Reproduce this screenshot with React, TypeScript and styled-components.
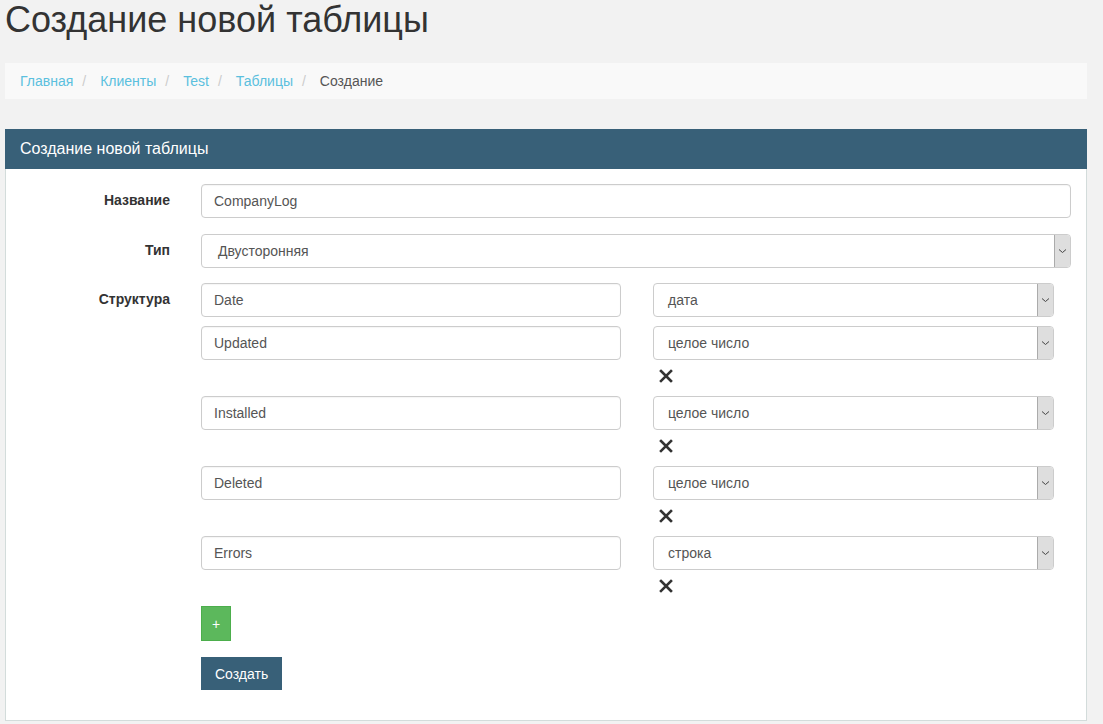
import React from 'react';
import styled, { createGlobalStyle } from 'styled-components';

const GlobalStyle = createGlobalStyle`
  html, body {
    margin: 0;
    padding: 0;
    background: #f2f2f2;
    font-family: "Liberation Sans", Arial, sans-serif;
    color: #333;
  }
  * {
    box-sizing: border-box;
  }
`;

const Page = styled.div`
  width: 1082px;
  margin-left: 5px;
  padding-bottom: 2px;
`;

const Title = styled.h1`
  margin: 0 0 23px;
  font-size: 36px;
  font-weight: 500;
  line-height: 40px;
  color: #333;
`;

const Breadcrumb = styled.ol`
  display: flex;
  align-items: center;
  list-style: none;
  margin: 0 0 30px;
  padding: 8px 15px;
  height: 36px;
  background: #f9f9f9;
  font-size: 14px;
  line-height: 20px;
`;

const Crumb = styled.li<{ $active?: boolean }>`
  color: ${(p) => (p.$active ? '#555' : '#5bc0de')};
`;

const Sep = styled.li`
  color: #ccc;
  margin: 0 14px 0 9px;
`;

const Panel = styled.div`
  background: #fff;
  border: 1px solid #d3dcdb;
  border-top: none;
`;

const PanelHeading = styled.div`
  height: 40px;
  margin: 0 -1px;
  padding: 0 15px;
  display: flex;
  align-items: center;
  background: #386078;
  color: #fff;
  font-size: 16px;
`;

const PanelBody = styled.div`
  padding: 15px 15px 30px 0;
`;

const FormRow = styled.div<{ $gap?: number }>`
  display: grid;
  grid-template-columns: 164px 1fr;
  column-gap: 31px;
  margin-bottom: ${(p) => p.$gap ?? 0}px;
`;

const Label = styled.label`
  text-align: right;
  font-weight: bold;
  font-size: 14px;
  padding-top: 8px;
  line-height: 16px;
  color: #333;
`;

const Input = styled.div`
  height: 34px;
  width: 100%;
  border: 1px solid #ccc;
  border-radius: 4px;
  padding: 0 12px;
  display: flex;
  align-items: center;
  font-size: 14px;
  color: #555;
  background: #fff;
  box-shadow: inset 0 1px 1px rgba(0, 0, 0, 0.04);
`;

const Select = styled.div`
  height: 34px;
  width: 100%;
  border: 1px solid #ccc;
  border-radius: 4px;
  display: flex;
  align-items: stretch;
  font-size: 14px;
  color: #555;
  background: #fff;
  overflow: hidden;
`;

const SelectValue = styled.span<{ $pad: number }>`
  flex: 1;
  display: flex;
  align-items: center;
  padding-left: ${(p) => p.$pad}px;
`;

const ArrowBox = styled.span`
  width: 17px;
  display: flex;
  align-items: center;
  justify-content: center;
  background: #dedede;
  border: 1px solid #c8c8c8;
  border-left-color: #ababab;
  margin: -1px -1px -1px 0;
`;

const Fields = styled.div`
  display: flex;
  flex-direction: column;
`;

const FieldRow = styled.div`
  display: grid;
  grid-template-columns: 420px 401px;
  column-gap: 32px;
  margin-bottom: 9px;
`;

const RemoveLine = styled.div`
  display: grid;
  grid-template-columns: 420px 401px;
  column-gap: 32px;
  margin: -1px 0 12px;
  height: 16px;
`;

const RemoveIcon = styled.span`
  grid-column: 2;
  padding-left: 6px;
  display: flex;
  align-items: center;
`;

const Actions = styled.div`
  display: flex;
  flex-direction: column;
  align-items: flex-start;
`;

const PlusButton = styled.button`
  width: 30px;
  height: 35px;
  background: #5cb85c;
  border: 1px solid #4cae4c;
  color: #fff;
  font-size: 14px;
  font-family: "Liberation Sans", Arial, sans-serif;
  padding: 0;
`;

const SubmitButton = styled.button`
  height: 33px;
  padding: 0 13px;
  margin-top: 16px;
  background: #386078;
  border: 1px solid #386078;
  color: #fff;
  font-size: 14px;
  font-family: "Liberation Sans", Arial, sans-serif;
`;

const Chevron = () => (
  <svg width="9" height="6" viewBox="0 0 9 6">
    <path d="M1 1.5 L4.5 4.5 L8 1.5" fill="none" stroke="#444" strokeWidth="1" />
  </svg>
);

const Cross = () => (
  <svg width="14" height="14" viewBox="0 0 14 14">
    <path d="M2 2 L12 12 M12 2 L2 12" stroke="#333" strokeWidth="2.6" strokeLinecap="square" />
  </svg>
);

const fields = [
  { name: 'Date', type: 'дата' },
  { name: 'Updated', type: 'целое число' },
  { name: 'Installed', type: 'целое число' },
  { name: 'Deleted', type: 'целое число' },
  { name: 'Errors', type: 'строка' },
];

const App: React.FC = () => {
  return (
    <>
      <GlobalStyle />
      <Page>
        <Title>Создание новой таблицы</Title>
        <Breadcrumb>
          <Crumb>Главная</Crumb>
          <Sep>/</Sep>
          <Crumb>Клиенты</Crumb>
          <Sep>/</Sep>
          <Crumb>Test</Crumb>
          <Sep>/</Sep>
          <Crumb>Таблицы</Crumb>
          <Sep>/</Sep>
          <Crumb $active>Создание</Crumb>
        </Breadcrumb>
        <Panel>
          <PanelHeading>Создание новой таблицы</PanelHeading>
          <PanelBody>
            <FormRow $gap={16}>
              <Label>Название</Label>
              <Input>CompanyLog</Input>
            </FormRow>
            <FormRow $gap={15}>
              <Label>Тип</Label>
              <Select>
                <SelectValue $pad={16}>Двусторонняя</SelectValue>
                <ArrowBox>
                  <Chevron />
                </ArrowBox>
              </Select>
            </FormRow>
            <FormRow>
              <Label>Структура</Label>
              <Fields>
                {fields.map((f, i) => (
                  <React.Fragment key={f.name}>
                    <FieldRow>
                      <Input>{f.name}</Input>
                      <Select>
                        <SelectValue $pad={14}>{f.type}</SelectValue>
                        <ArrowBox>
                          <Chevron />
                        </ArrowBox>
                      </Select>
                    </FieldRow>
                    {i > 0 && (
                      <RemoveLine>
                        <RemoveIcon>
                          <Cross />
                        </RemoveIcon>
                      </RemoveLine>
                    )}
                  </React.Fragment>
                ))}
                <Actions>
                  <PlusButton>+</PlusButton>
                  <SubmitButton>Создать</SubmitButton>
                </Actions>
              </Fields>
            </FormRow>
          </PanelBody>
        </Panel>
      </Page>
    </>
  );
};

export default App;
